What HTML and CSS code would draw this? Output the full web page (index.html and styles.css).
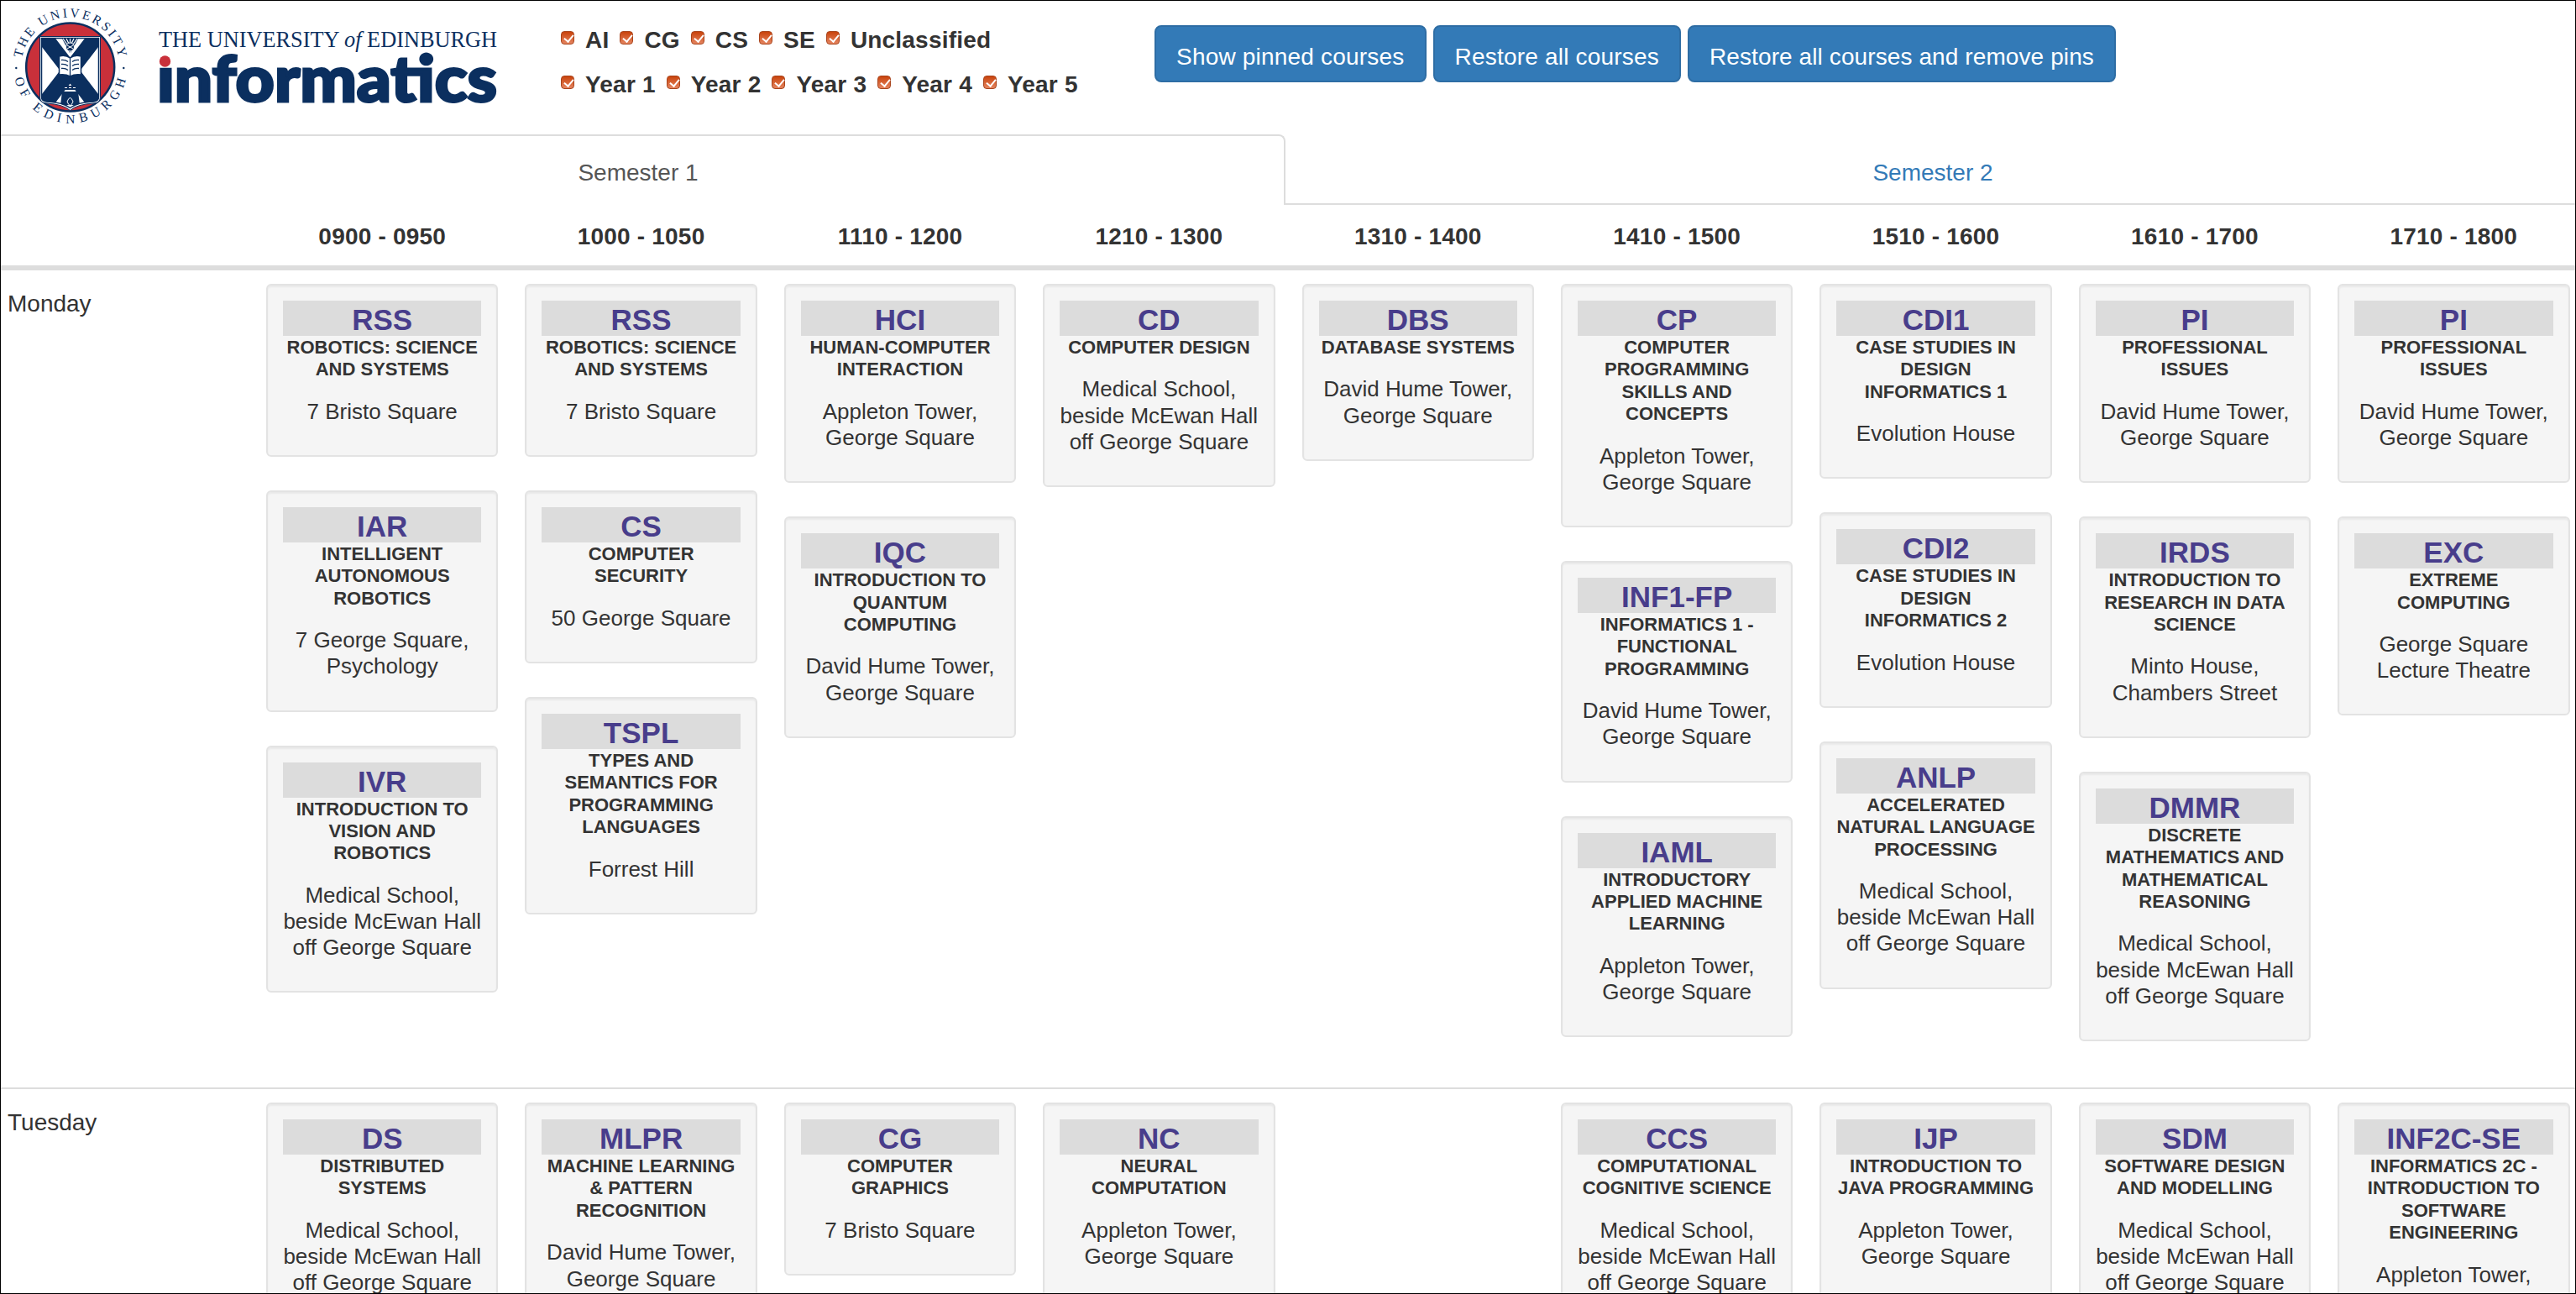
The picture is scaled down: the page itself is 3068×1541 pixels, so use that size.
FILE: index.html
```html
<!DOCTYPE html>
<html lang="en">
<head>
<meta charset="utf-8">
<title>Informatics Timetable</title>
<link rel="stylesheet" href="styles.css">
</head>
<body>
<header class="top">
  <svg class="logo" width="620" height="159" viewBox="1 1 620 159" role="img" aria-label="The University of Edinburgh Informatics">
    <defs>
      <path id="arc-top" d="M26.200 69A58.500 58.500 0 0 1 141.800 71"/>
      <path id="arc-bottom" d="M17.400 93.500A68 68 0 0 0 150.200 93"/>
      <clipPath id="shield-clip"><path d="M49 45H118V115Q118 121 111 121.500Q92 122 83.500 129Q75 122 56 121.500Q49 121 49 115Z"/></clipPath>
    </defs>
    <circle cx="83.700" cy="80" r="52.500" fill="#c9303a" stroke="#0b2f5f" stroke-width="2.500"/>
    <path d="M47.500 43.500H119.500V115Q119.500 122.500 112 123Q92 124 83.500 131.500Q75 124 55 123Q47.500 122.500 47.500 115Z" fill="#fff" stroke="#0b2f5f" stroke-width="1"/>
    <g clip-path="url(#shield-clip)">
      <path d="M45 34L122 134M122 34L45 134" stroke="#0b2f5f" stroke-width="19"/>
      <path d="M74 109H93L95 125H72ZM75 102H92V107H75Z" fill="#0b2f5f"/>
      <path d="M77 104.500h3M82 104.500h3M87 104.500h3" stroke="#fff" stroke-width="1.200"/>
      <path d="M80 121Q83.500 112 87 121Q83.500 130 80 121Z" fill="#0b2f5f" stroke="#fff"/>
    </g>
    <path d="M49.500 45.500H117.500V115Q117.500 120.500 111 121Q92 122 83.500 128.500Q75 122 56 121Q49.500 120.500 49.500 115Z" fill="none" stroke="#0b2f5f" stroke-width="1.500"/>
    <path d="M83.500 64L74 46H93Z" fill="#0b2f5f"/>
    <path d="M75 46L80 53M79 46L82 52M83.500 46V52M88 46L85 52M92 46L87 53" stroke="#fff" stroke-width="1.200"/>
    <circle cx="83.500" cy="56" r="5" fill="#0b2f5f" stroke="#fff" stroke-width="1"/>
    <path d="M80 54l7 4M80 58l7-4M83.500 61V65" stroke="#fff" stroke-width="1"/>
    <path d="M70.500 67Q78 65 83.500 69Q89 65 96.500 67V89Q89 88 83.500 91Q78 88 70.500 89Z" fill="#fff" stroke="#0b2f5f" stroke-width="1.500"/>
    <path d="M83.500 69V90M73 71.500Q78 71 81 73.500M73 76.500Q78 76 81 78.500M73 81.500Q78 81 81 83.500M94 71.500Q89 71 86 73.500M94 76.500Q89 76 86 78.500M94 81.500Q89 81 86 83.500" fill="none" stroke="#0b2f5f" stroke-width="1.300"/>
    <circle cx="19.300" cy="81" r="1.200" fill="#0b2f5f"/>
    <circle cx="147.300" cy="81" r="1.200" fill="#0b2f5f"/>
    <text class="ring"><textPath href="#arc-top" textLength="163">THE UNIVERSITY</textPath></text>
    <text class="ring"><textPath href="#arc-bottom" textLength="182">OF EDINBURGH</textPath></text>
    <text class="uni" x="189" y="55.700" textLength="403" lengthAdjust="spacingAndGlyphs">THE UNIVERSITY <tspan class="uni-of">of</tspan> EDINBURGH</text>
    <text class="school" x="187" y="120.700" textLength="405" lengthAdjust="spacingAndGlyphs">informatics</text>
    <rect x="186" y="60" width="21" height="20.500" fill="#fff"/>
    <circle cx="196.500" cy="73" r="6.700" fill="#c9303a"/>
  </svg>
  <div class="filters">
    <div class="filter-row">
      <label><i class="box"></i>AI</label><label><i class="box"></i>CG</label><label><i class="box"></i>CS</label><label><i class="box"></i>SE</label><label><i class="box"></i>Unclassified</label>
    </div>
    <div class="filter-row">
      <label><i class="box"></i>Year 1</label><label><i class="box"></i>Year 2</label><label><i class="box"></i>Year 3</label><label><i class="box"></i>Year 4</label><label><i class="box"></i>Year 5</label>
    </div>
  </div>
  <div class="actions">
    <button class="btn">Show pinned courses</button>
    <button class="btn">Restore all courses</button>
    <button class="btn wide">Restore all courses and remove pins</button>
  </div>
</header>
<nav class="tabs"><a class="tab active">Semester 1</a><a class="tab">Semester 2</a></nav>
<main>
  <div class="row times">
    <div></div><div>0900 - 0950</div><div>1000 - 1050</div><div>1110 - 1200</div><div>1210 - 1300</div><div>1310 - 1400</div><div>1410 - 1500</div><div>1510 - 1600</div><div>1610 - 1700</div><div>1710 - 1800</div>
  </div>
  <section class="row day first">
    <div class="name">Monday</div>
    <div class="slot">
      <article class="card"><h4>RSS</h4><h5>Robotics: Science and Systems</h5><p>7 Bristo Square</p></article>
      <article class="card"><h4>IAR</h4><h5>Intelligent Autonomous Robotics</h5><p>7 George Square, Psychology</p></article>
      <article class="card"><h4>IVR</h4><h5>Introduction to Vision and Robotics</h5><p>Medical School, beside McEwan Hall off George Square</p></article>
    </div>
    <div class="slot">
      <article class="card"><h4>RSS</h4><h5>Robotics: Science and Systems</h5><p>7 Bristo Square</p></article>
      <article class="card"><h4>CS</h4><h5>Computer Security</h5><p>50 George Square</p></article>
      <article class="card"><h4>TSPL</h4><h5>Types and Semantics for Programming Languages</h5><p>Forrest Hill</p></article>
    </div>
    <div class="slot">
      <article class="card"><h4>HCI</h4><h5>Human-Computer Interaction</h5><p>Appleton Tower, George Square</p></article>
      <article class="card"><h4>IQC</h4><h5>Introduction to Quantum Computing</h5><p>David Hume Tower, George Square</p></article>
    </div>
    <div class="slot">
      <article class="card"><h4>CD</h4><h5>Computer Design</h5><p>Medical School, beside McEwan Hall off George Square</p></article>
    </div>
    <div class="slot">
      <article class="card"><h4>DBS</h4><h5>Database Systems</h5><p>David Hume Tower, George Square</p></article>
    </div>
    <div class="slot">
      <article class="card"><h4>CP</h4><h5>Computer Programming Skills and Concepts</h5><p>Appleton Tower, George Square</p></article>
      <article class="card"><h4>INF1-FP</h4><h5>Informatics 1 - Functional Programming</h5><p>David Hume Tower, George Square</p></article>
      <article class="card"><h4>IAML</h4><h5>Introductory Applied Machine Learning</h5><p>Appleton Tower, George Square</p></article>
    </div>
    <div class="slot">
      <article class="card"><h4>CDI1</h4><h5>Case Studies in Design Informatics 1</h5><p>Evolution House</p></article>
      <article class="card"><h4>CDI2</h4><h5>Case Studies in Design Informatics 2</h5><p>Evolution House</p></article>
      <article class="card"><h4>ANLP</h4><h5>Accelerated Natural Language Processing</h5><p>Medical School, beside McEwan Hall off George Square</p></article>
    </div>
    <div class="slot">
      <article class="card"><h4>PI</h4><h5>Professional Issues</h5><p>David Hume Tower, George Square</p></article>
      <article class="card"><h4>IRDS</h4><h5>Introduction to Research in Data Science</h5><p>Minto House, Chambers Street</p></article>
      <article class="card"><h4>DMMR</h4><h5>Discrete Mathematics and Mathematical Reasoning</h5><p>Medical School, beside McEwan Hall off George Square</p></article>
    </div>
    <div class="slot">
      <article class="card"><h4>PI</h4><h5>Professional Issues</h5><p>David Hume Tower, George Square</p></article>
      <article class="card"><h4>EXC</h4><h5>Extreme Computing</h5><p>George Square Lecture Theatre</p></article>
    </div>
  </section>
  <section class="row day">
    <div class="name">Tuesday</div>
    <div class="slot">
      <article class="card"><h4>DS</h4><h5>Distributed Systems</h5><p>Medical School, beside McEwan Hall off George Square</p></article>
    </div>
    <div class="slot">
      <article class="card"><h4>MLPR</h4><h5>Machine Learning &amp; Pattern Recognition</h5><p>David Hume Tower, George Square</p></article>
    </div>
    <div class="slot">
      <article class="card"><h4>CG</h4><h5>Computer Graphics</h5><p>7 Bristo Square</p></article>
    </div>
    <div class="slot">
      <article class="card"><h4>NC</h4><h5>Neural Computation</h5><p>Appleton Tower, George Square</p></article>
    </div>
    <div class="slot"></div>
    <div class="slot">
      <article class="card"><h4>CCS</h4><h5>Computational Cognitive Science</h5><p>Medical School, beside McEwan Hall off George Square</p></article>
    </div>
    <div class="slot">
      <article class="card"><h4>IJP</h4><h5>Introduction to Java Programming</h5><p>Appleton Tower, George Square</p></article>
    </div>
    <div class="slot">
      <article class="card"><h4>SDM</h4><h5>Software Design and Modelling</h5><p>Medical School, beside McEwan Hall off George Square</p></article>
    </div>
    <div class="slot">
      <article class="card"><h4>INF2C-SE</h4><h5>Informatics 2C - Introduction to Software Engineering</h5><p>Appleton Tower, George Square</p></article>
    </div>
  </section>
</main>
</body>
</html>
```
FILE: styles.css
```css
* { box-sizing: border-box; }
html { overflow: hidden; }
body {
  margin: 0;
  width: 3068px;
  height: 1541px;
  border: 1px solid #000;
  overflow: hidden;
  background: #fff;
  color: #333;
  font: 28px/40px "Liberation Sans", Arial, sans-serif;
}

/* Header */
.top { display: flex; align-items: flex-start; height: 159px; }
.logo { flex: none; width: 620px; height: 159px; }
.ring { font: 15.500px "Liberation Serif", serif; fill: #0b2f5f; }
.uni { font: 27.500px "Liberation Serif", serif; fill: #0b2f5f; }
.uni-of { font-style: italic; }
.school { font: 900 77px Lato, sans-serif; fill: #0b2f5f; stroke: #0b2f5f; stroke-width: 3px; }
.filters { width: 706px; padding: 27px 0 0 47px; flex: none; }
.filter-row { display: flex; gap: 13px; height: 53px; font-weight: bold; letter-spacing: .2px; }
.filter-row label { display: flex; gap: 13px; white-space: nowrap; }
.box {
  position: relative;
  width: 16px;
  height: 16px;
  margin-top: 9px;
  border: 1px solid #a9451d;
  border-radius: 4px;
  background: linear-gradient(#c9430c, #e58560);
}
.box::after {
  content: "";
  position: absolute;
  left: 5px;
  top: 1px;
  width: 5px;
  height: 9px;
  border: solid #fff;
  border-width: 0 2px 2px 0;
  transform: rotate(40deg);
}
.actions { display: flex; gap: 8px; padding: 29px 0 0 48px; }
.btn {
  height: 68px;
  padding: 16px 24px 8px;
  border: 2px solid #2e6da4;
  border-radius: 8px;
  background: #337ab7;
  color: #fff;
  font: inherit;
  letter-spacing: .2px;
  white-space: nowrap;
}
.btn.wide { letter-spacing: .1px; }

/* Semester tabs */
.tabs { display: grid; grid-template-columns: 1530px 1fr; height: 84px; text-align: center; }
.tab { padding: 26px 0 0 6px; color: #337ab7; border-bottom: 2px solid #ddd; }
.tab.active {
  padding: 24px 10px 0 0;
  color: #555;
  border: 2px solid #ddd;
  border-width: 2px 2px 0 0;
  border-radius: 0 8px 0 0;
}

/* Timetable */
.row { display: grid; grid-template-columns: 284px repeat(9, 276.400px); column-gap: 32px; }
.times { height: 72px; padding-top: 18px; font-weight: bold; text-align: center; letter-spacing: .2px; }
.day { padding-top: 16px; padding-bottom: 15px; border-top: 2px solid #ddd; }
.day.first { border-top-width: 6px; }
.name { padding-left: 8px; padding-top: 4px; }
.card {
  margin-bottom: 40px;
  padding: 18px;
  border: 2px solid #e3e3e3;
  border-radius: 6px;
  background: #f5f5f5;
  box-shadow: inset 0 2px 2px rgba(0, 0, 0, .05);
  text-align: center;
}
.card h4 { margin: 0; padding-top: 4px; background: #dcdcdc; color: #483d8b; font-size: 35px; line-height: 38px; }
.card h5 { margin: 0 0 21px; padding-top: 1px; font-size: 22px; line-height: 26.400px; text-transform: uppercase; }
.card p { margin: 0 0 18px; font-size: 26px; line-height: 31.200px; }
```
